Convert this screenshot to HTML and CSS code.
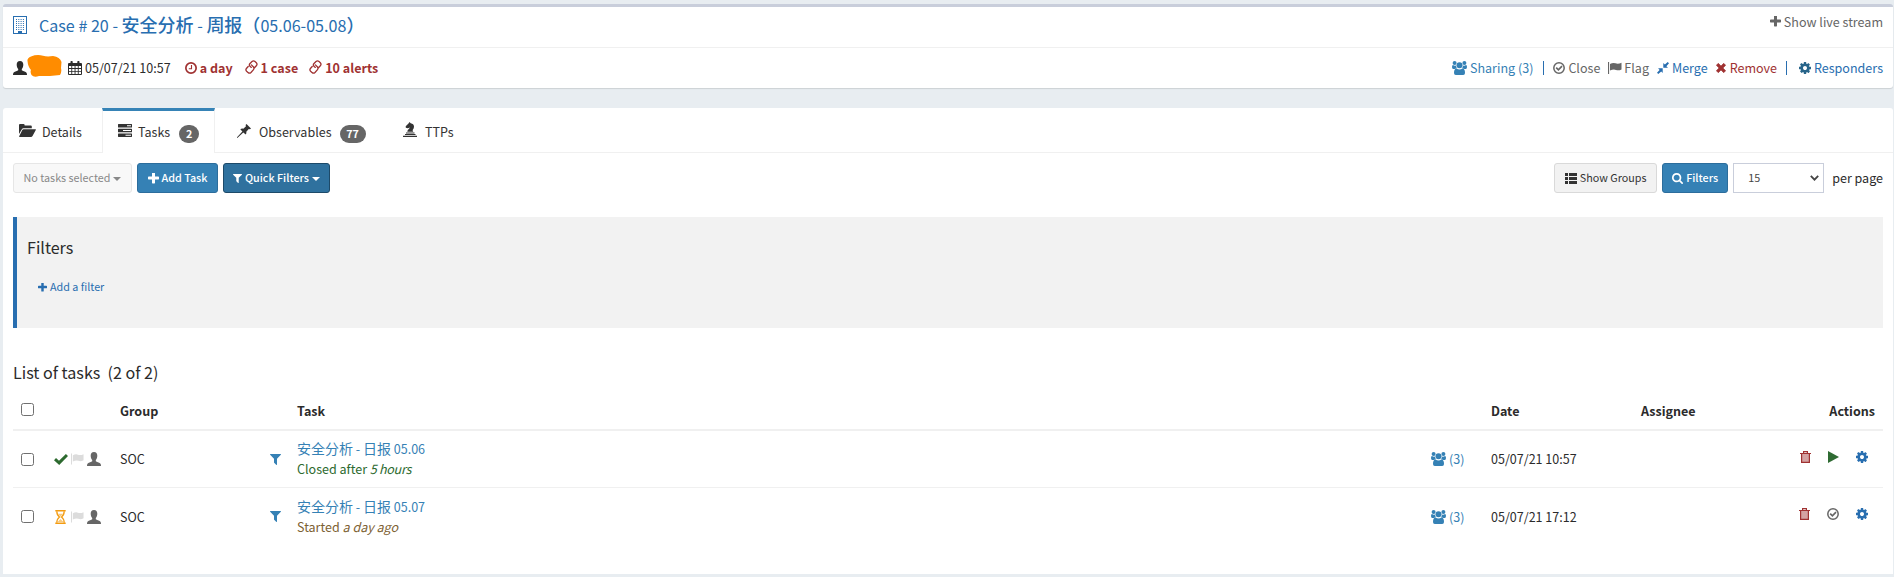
FILE: index.html
```
<!DOCTYPE html>
<html lang="zh-CN">
<head>
<meta charset="utf-8">
<title>Case # 20</title>
<link rel="stylesheet" href="styles.css">
</head>
<body>
<svg class="sprite" xmlns="http://www.w3.org/2000/svg">
  <symbol id="plus" viewBox="192 192 1408 1408"><path d="M1600 736v192q0 40-28 68t-68 28h-416v416q0 40-28 68t-68 28h-192q-40 0-68-28t-28-68v-416h-416q-40 0-68-28t-28-68v-192q0-40 28-68t68-28h416v-416q0-40 28-68t68-28h192q40 0 68 28t28 68v416h416q40 0 68 28t28 68z"/></symbol>
  <symbol id="cog" viewBox="128 128 1536 1536"><path d="M1152 896q0-106-75-181t-181-75-181 75-75 181 75 181 181 75 181-75 75-181zm512-109v222q0 12-8 23t-20 13l-185 28q-19 54-39 91 35 50 107 138 10 12 10 25t-9 23q-27 37-99 108t-94 71q-12 0-26-9l-138-108q-44 23-91 38-16 136-29 186-7 28-36 28h-222q-14 0-24.5-8.5t-11.5-21.5l-28-184q-49-16-90-37l-141 107q-10 9-25 9-14 0-25-11-126-114-165-168-7-10-7-23 0-12 8-23 15-21 51-66.5t54-70.5q-27-50-41-99l-183-27q-13-2-21-12.5t-8-23.5v-222q0-12 8-23t19-13l186-28q14-46 39-92-40-57-107-138-10-12-10-24 0-10 9-23 26-36 98.5-107.5t94.5-71.5q13 0 26 10l138 107q44-23 91-38 16-136 29-186 7-28 36-28h222q14 0 24.500 8.500t11.500 21.500l28 184q49 16 90 37l142-107q9-9 24-9 13 0 25 10 129 119 165 170 7 8 7 22 0 12-8 23-15 21-51 66.500t-54 70.500q26 50 41 98l183 28q13 2 21 12.500t8 23.500z"/></symbol>
  <symbol id="filter" viewBox="192 256 1408 1408"><path d="M1595 295q17 41-14 70l-493 493v742q0 42-39 59-13 5-25 5-27 0-45-19l-256-256q-19-19-19-45v-486l-493-493q-31-29-14-70 17-39 59-39h1280q42 0 59 39z"/></symbol>
  <symbol id="search" viewBox="64 128 1664 1664"><path d="M1216 832q0-185-131.500-316.500t-316.500-131.500-316.500 131.500-131.500 316.500 131.500 316.500 316.500 131.500 316.500-131.500 131.500-316.500zm512 832q0 52-38 90t-90 38q-54 0-90-38l-343-342q-179 124-399 124-143 0-273.500-55.500t-225-150-150-225-55.500-273.500 55.500-273.500 150-225 225-150 273.500-55.500 273.500 55.500 225 150 150 225 55.500 273.500q0 220-124 399l343 343q37 37 37 90z"/></symbol>
  <symbol id="building" viewBox="0 0 14 18"><path fill-rule="evenodd" d="M0 0h14v18H0zM1 1v16h4v-2h4v2h4V1z"/><path d="M3 3.500h9M3 5.500h9M3 7.500h9M3 9.500h9M3 11.500h9M3 13.500h9" stroke="currentColor" stroke-width="1" stroke-dasharray="1 1.300"/></symbol>
  <symbol id="user" viewBox="0 0 14 14"><path d="M7 0C9.300 0 10.300 1.600 10.300 3.800c0 2-.7 3.200-1.500 4.200v1.300c1.800 1 3.900 1.500 4.700 2.500.4.600.5 1.300.5 2.200H0c0-.9.100-1.600.5-2.200.8-1 2.900-1.500 4.700-2.500V8C4.400 7 3.700 5.800 3.700 3.800 3.700 1.600 4.700 0 7 0z"/></symbol>
  <symbol id="calendar" viewBox="0 0 14 14"><path fill-rule="evenodd" d="M1 2h1.500V.7q0-.7.700-.7h.8q.7 0 .7.700V2h4.600V.7q0-.7.700-.7h.8q.7 0 .7.700V2H13q1 0 1 1v10q0 1-1 1H1q-1 0-1-1V3q0-1 1-1zM1 5v2h2.300V5zm3.200 0v2h2.400V5zm3.300 0v2h2.300V5zm3.200 0v2H13V5zM1 7.900v2h2.300v-2zm3.200 0v2h2.400v-2zm3.300 0v2h2.300v-2zm3.200 0v2H13v-2zM1 10.800V13h2.300v-2.200zm3.200 0V13h2.400v-2.200zm3.300 0V13h2.300v-2.200zm3.200 0V13H13v-2.200z"/></symbol>
  <symbol id="clock" viewBox="0 0 12 12"><circle cx="6" cy="6" r="5.150" fill="none" stroke="currentColor" stroke-width="1.700"/><path d="M6.500 3v3.800H3.800" fill="none" stroke="currentColor" stroke-width="1.100"/></symbol>
  <symbol id="link" viewBox="0 0 13 14"><g fill="none" stroke="currentColor" stroke-width="1.300" stroke-linecap="round"><path d="M6.300 7.400 5 6.300Q3.800 5 4.800 3.700L7 1.500Q8.500.2 10 1.500L11.300 2.700Q12.600 4 11.500 5.500L9.500 7.700M6.400 4.900 8.500 7Q9.500 8.300 8.500 9.700L6 12.500Q4.500 13.800 3 12.500L1.600 11.300Q.3 10 1.400 8.500L3.200 6.500"/></g></symbol>
  <symbol id="users" viewBox="0 0 15 14"><circle cx="2.600" cy="2" r="2"/><circle cx="12.400" cy="2" r="2"/><circle cx="7.500" cy="4.300" r="3"/><path d="M0 6q0-2 1-2 1.500 1 3 .4Q4 6 5 7.200 3.700 7.300 3 8H1.200Q0 7.900 0 6zM15 6q0-2-1-2-1.500 1-3 .4.0 1.600-1 2.800 1.300.1 2 .8h1.800Q15 7.900 15 6z"/><path d="M4.500 7.500Q7.500 9.700 10.500 7.500 13 7.500 13 12q0 2-1.800 2H3.800Q2 14 2 12 2 7.500 4.500 7.500z"/></symbol>
  <symbol id="checkcircle" viewBox="0 0 12 12"><circle cx="6" cy="6" r="5.200" fill="none" stroke="currentColor" stroke-width="1.500"/><path d="M3.200 5.700 5.400 7.800 9 4.200" fill="none" stroke="currentColor" stroke-width="1.700"/></symbol>
  <symbol id="flag" viewBox="0 0 14 12"><path d="M0 0h1.100v12H0zM2 2Q5 .2 7.500 1.300 10 2.300 13.500.8V7.400Q10.500 9 8 7.900 5.500 6.800 2 8.600z"/></symbol>
  <symbol id="merge" viewBox="0 0 12 12"><path d="M5.700 6.300V11L4.200 9.500 1.300 12 0 10.700 2.600 7.900 1.100 6.300zM6.300 5.700V1L7.900 2.500 10.700 0 12 1.300 9.400 4.200 11 5.700z"/></symbol>
  <symbol id="times" viewBox="0 0 10 10"><path d="M2.300.3 5 3 7.700.3 9.700 2.300 7 5 9.700 7.700 7.700 9.700 5 7 2.300 9.700.3 7.700 3 5 .3 2.300z" stroke="currentColor" stroke-width=".6" stroke-linejoin="round"/></symbol>
  <symbol id="folder" viewBox="0 0 17 13"><path d="M0 10V1Q0 0 1 0h3.600q1 0 1 1v.6h6.200q1 0 1 1v1.600H4.500Q3.400 4.200 2.700 5.400z"/><path d="M4.600 5.200H16.300q1 0 .5.900L13.500 12q-.5 1-1.500 1H.7q-1 0-.4-1L3.300 6q.4-.8 1.300-.8z"/></symbol>
  <symbol id="tasks" viewBox="0 0 14 13"><path fill-rule="evenodd" d="M.5 0h13q.5 0 .5.500v2.700q0 .4-.5.400H.5Q0 3.600 0 3.200V.5Q0 0 .5 0zM9 1.300v1h4v-1zM.5 4.700h13q.5 0 .5.500v2.700q0 .4-.5.400H.5Q0 8.300 0 7.900V5.200q0-.5.500-.5zM5 6v1h8V6zM.5 9.400h13q.5 0 .5.500v2.700q0 .4-.5.400H.5q-.5 0-.5-.4V9.900q0-.5.500-.5zM7.500 10.700v1H13v-1z"/></symbol>
  <symbol id="pin" viewBox="0 0 14 14"><path d="M9.500 0 14 4.500 13 5.300 11.800 5 9.300 7.700Q9.800 9.300 8.700 10.600L6.300 8.500.6 13.800 0 13.900 0 13.300 5.400 7.600 3.300 5.300Q4.700 4.200 6.300 4.700L9 2.200 8.600 1z"/></symbol>
  <symbol id="knight" viewBox="0 0 14 15"><path d="M6.500 0 7.700 1.200Q10.800 1.700 11 4.600 11.100 6.500 9.800 7.700 9.300 8.900 10.300 9.700H4.300Q4.200 8 6 6.700L7 5.500 4.800 6.300 2.800 5.800 2.700 4.300 5.500 1.500zM3 10.500h8.500v1H3zM2 12.100h10.500v1H2zM0 13.700h14V15H0z"/></symbol>
  <symbol id="list" viewBox="0 0 12 11"><path d="M0 0h3v3H0zM4 0h8v3H4zM0 4h3v3H0zM4 4h8v3H4zM0 8h3v3H0zM4 8h8v3H4z"/></symbol>
  <symbol id="check" viewBox="0 0 14 11"><path d="M0 6.200 2 4.100 5 6.700 11.900 0 14 2.100 5.200 11z"/></symbol>
  <symbol id="hourglass" viewBox="0 0 11 14"><path d="M.3.700h10.400M.3 13.300h10.400" stroke="currentColor" stroke-width="1.400"/><path d="M1.800 1.200Q1.800 5 4.500 7 1.800 9 1.800 12.800M9.200 1.200Q9.200 5 6.500 7 9.200 9 9.200 12.800" fill="none" stroke="currentColor" stroke-width="1.300"/><path d="M2.800 3.800h5.400L5.500 6.600zM2.500 12 5.500 9 8.500 12z" opacity=".55"/></symbol>
  <symbol id="trash" viewBox="0 0 11 12"><path d="M1.500 3h8v8.400h-8z" opacity=".45"/><path d="M0 2.500h11M1.600 3v8.400h7.800V3M3.600 2V.7h3.800V2" fill="none" stroke="currentColor" stroke-width="1.200"/></symbol>
  <symbol id="play" viewBox="0 0 11 12"><path d="M0 0 11 6 0 12z"/></symbol>
  <symbol id="scribble" viewBox="0 0 35 22"><path d="M.5 6Q0 3 4 1.500 10-1 16 .7 20 2 26 1 33 2 34.500 7L34 13Q35 17 33 20L23 21H12Q7 23 4.500 20 3 17 4 15 1 12 .5 6z"/></symbol>
</svg>

<header class="case">
  <div class="case-title">
    <h1><svg class="i-building"><use href="#building"/></svg><span>Case # 20 - <b class="han">安全分析</b> - <b class="han">周报（</b>05.06-05.08<b class="han">）</b></span></h1>
    <a class="stream gray"><svg class="i11"><use href="#plus"/></svg>Show live stream</a>
  </div>
  <div class="case-info">
    <div class="meta">
      <svg class="i14"><use href="#user"/></svg><svg class="i-scribble"><use href="#scribble"/></svg>
      <span class="it date"><svg class="i14"><use href="#calendar"/></svg>05/07/21 10:57</span>
      <strong class="it age"><svg class="i12"><use href="#clock"/></svg>a day</strong>
      <strong class="it cases"><svg class="i-link"><use href="#link"/></svg>1 case</strong>
      <strong class="it alerts"><svg class="i-link"><use href="#link"/></svg>10 alerts</strong>
    </div>
    <nav class="case-actions">
      <a class="it sky sharing"><svg class="i-users"><use href="#users"/></svg>Sharing (3)</a>
      <i class="sep"></i>
      <a class="it gray close"><svg class="i12"><use href="#checkcircle"/></svg>Close</a>
      <a class="it gray flagged"><svg class="i-flag"><use href="#flag"/></svg>Flag</a>
      <a class="it blue merge"><svg class="i12"><use href="#merge"/></svg>Merge</a>
      <a class="it red remove"><svg class="i10"><use href="#times"/></svg>Remove</a>
      <i class="sep"></i>
      <a class="it blue responders"><svg class="i12 teal"><use href="#cog"/></svg>Responders</a>
    </nav>
  </div>
</header>

<main class="panel">
  <nav class="tabs">
    <a class="tab t-details"><svg class="i-folder"><use href="#folder"/></svg>Details</a>
    <a class="tab t-tasks active"><svg class="i-tasks"><use href="#tasks"/></svg>Tasks<span class="badge">2</span></a>
    <a class="tab t-obs"><svg class="i-pin"><use href="#pin"/></svg>Observables<span class="badge wide">77</span></a>
    <a class="tab t-ttps"><svg class="i-knight"><use href="#knight"/></svg>TTPs</a>
  </nav>
  <div class="toolbar">
    <button class="btn none">No tasks selected<i class="caret"></i></button>
    <button class="btn primary add"><svg class="i11"><use href="#plus"/></svg>Add Task</button>
    <button class="btn dark quick"><svg class="i9"><use href="#filter"/></svg>Quick Filters<i class="caret"></i></button>
    <div class="spacer"></div>
    <button class="btn groups"><svg class="i-list"><use href="#list"/></svg>Show Groups</button>
    <button class="btn primary filters-btn"><svg class="i11"><use href="#search"/></svg>Filters</button>
    <div class="select"><span>15</span><svg class="i-chev" viewBox="0 0 9 6"><path d="M.8.8 4.500 4.600 8.200.8" fill="none" stroke="currentColor" stroke-width="1.800"/></svg></div>
    <span class="per-page">per page</span>
  </div>
  <section class="filters">
    <h2>Filters</h2>
    <a class="blue"><svg class="i9"><use href="#plus"/></svg>Add a filter</a>
  </section>
  <h2 class="list-title">List of tasks&nbsp; (2 of 2)</h2>
  <div class="table">
    <div class="row head">
      <span><i class="box"></i></span><span></span><span>Group</span><span></span><span>Task</span><span></span><span>Date</span><span>Assignee</span><span class="end">Actions</span>
    </div>
    <div class="row">
      <span><i class="box"></i></span>
      <span class="state"><svg class="i-check"><use href="#check"/></svg><svg class="i-flag light"><use href="#flag"/></svg><svg class="i14 gray"><use href="#user"/></svg></span>
      <span>SOC</span>
      <span class="sky"><svg class="i-filter"><use href="#filter"/></svg></span>
      <div class="task"><a class="sky"><b class="han">安全分析</b> - <b class="han">日报</b> 05.06</a><p class="closed">Closed after <em>5 hours</em></p></div>
      <span class="it sky share"><svg class="i-users"><use href="#users"/></svg>(3)</span>
      <span class="dt">05/07/21 10:57</span><span></span>
      <span class="acts"><svg class="i-trash red"><use href="#trash"/></svg><svg class="i-play"><use href="#play"/></svg><svg class="i12 blue"><use href="#cog"/></svg></span>
    </div>
    <div class="row last">
      <span><i class="box"></i></span>
      <span class="state"><svg class="i-hour"><use href="#hourglass"/></svg><svg class="i-flag light"><use href="#flag"/></svg><svg class="i14 gray"><use href="#user"/></svg></span>
      <span>SOC</span>
      <span class="sky"><svg class="i-filter"><use href="#filter"/></svg></span>
      <div class="task"><a class="sky"><b class="han">安全分析</b> - <b class="han">日报</b> 05.07</a><p class="started">Started <em>a day ago</em></p></div>
      <span class="it sky share"><svg class="i-users"><use href="#users"/></svg>(3)</span>
      <span class="dt">05/07/21 17:12</span><span></span>
      <span class="acts"><svg class="i-trash red"><use href="#trash"/></svg><svg class="i12 gray"><use href="#checkcircle"/></svg><svg class="i12 blue"><use href="#cog"/></svg></span>
    </div>
  </div>
</main>
</body>
</html>
```

FILE: styles.css
```
* { box-sizing: border-box; }
body {
  margin: 0; padding: 4px 1px 3px 3px; height: 577px; overflow: hidden;
  background: #e8edf1; color: #2b2b2b;
  font: 12.54px/20px "Noto Sans CJK SC", "Open Sans", sans-serif;
  display: flex; flex-direction: column; gap: 20px;
}
h1, h2, p { margin: 0; font-weight: 400; }
svg { fill: currentColor; flex: none; display: block; overflow: visible; }
.sprite { position: absolute; width: 0; height: 0; }
.han { font-size: 14px; font-weight: 400; }
.gray { color: #666; } .blue { color: #286eb0; } .sky { color: #3581b5; }
.red { color: #a03232; } .teal { color: #28658a; } .light { color: #dcdcdc; }
.i9 { width: 9px; height: 9px; } .i10 { width: 10px; height: 10px; }
.i11 { width: 11px; height: 11px; } .i12 { width: 12px; height: 12px; }
.i14 { width: 14px; height: 14px; }
.i-building { width: 14px; height: 18px; }
.i-scribble { width: 35px; height: 22px; color: #ff8c00; margin-top: -5px; }
.i-link { width: 13px; height: 14px; margin-top: -2px; }
.i-users { width: 15px; height: 14px; }
.i-flag { width: 14px; height: 12px; }
.i-folder { width: 17px; height: 13px; }
.i-tasks { width: 14px; height: 13px; }
.i-pin { width: 14px; height: 14px; }
.i-knight { width: 14px; height: 15px; }
.i-list { width: 12px; height: 11px; }
.i-chev { width: 9px; height: 6px; }
.i-check { width: 14px; height: 11px; color: #2d6a2f; }
.i-hour { width: 11px; height: 14px; color: #f39c12; margin: 0 2px 0 1px; }
.i-filter { width: 11px; height: 11px; }
.i-trash { width: 11px; height: 12px; }
.i-play { width: 11px; height: 12px; color: #2f6b33; }

.case {
  height: 84px; flex: none; background: #fff; border-top: 3px solid #c9cedb;
  border-radius: 3px; box-shadow: 0 1px 1px rgba(0,0,0,.12);
}
.case-title {
  height: 41px; padding: 0 10px; border-bottom: 1px solid #f0f0f0;
  display: flex; justify-content: space-between;
}
.case-title h1 { display: flex; align-items: center; gap: 12px; color: #286eb0; font-size: 16.1px; line-height: 36px; height: 36px; white-space: pre; }
.case-title .han { font-size: 18px; line-height: 1; font-weight: 500; }
.stream { display: flex; align-items: center; gap: 3px; height: 29px; }
.case-info { height: 40px; padding: 0 10px; display: flex; justify-content: space-between; align-items: center; }
.meta, .case-actions { display: flex; align-items: center; }
.it { display: flex; align-items: center; gap: 3px; white-space: nowrap; }
.date { margin-left: 6px; }
.meta strong { color: #a03232; }
.age { margin-left: 14px; }
.cases { margin-left: 12px; }
.alerts { margin-left: 11px; }
.sep { width: 1px; height: 14px; background: #286eb0; margin: 0 9px; }
.sharing { margin-right: 1px; }
.flagged, .merge, .remove { margin-left: 8px; }
.flagged { gap: 2px; }
.remove { gap: 4px; }
.responders { margin-left: 3px; }

.panel { flex: 1; background: #fff; border-radius: 3px 3px 0 0; }
.tabs { display: flex; height: 45px; border-bottom: 1px solid #f0f0f0; }
.tab { display: flex; align-items: center; height: 45px; padding-top: 2px; color: #333; border: solid transparent; border-width: 0 1px; }
.tab svg { margin-top: -2px; }
.t-details { width: 99px; padding-left: 15px; gap: 6px; }
.t-tasks { width: 113px; padding-left: 15px; gap: 6px; }
.tab.active { background: #fff; border-color: #f0f0f0; border-top: 3px solid #3683b6; padding: 0 0 1px 15px; }
.t-obs { width: 167px; padding-left: 21px; gap: 8px; }
.t-ttps { padding-left: 20px; gap: 8px; }
.tab .i-knight { margin-top: -5px; }
.badge { width: 20px; height: 18px; border-radius: 9px; background: #666; color: #fff; font-size: 10.75px; font-weight: 700; line-height: 18px; text-align: center; margin: 4px 0 0 3px; }
.wide { width: 26px; margin-left: 0; }

.toolbar { display: flex; align-items: center; padding: 10px 10px 0; height: 40px; }
.btn {
  display: flex; align-items: center; justify-content: center; height: 30px; padding: 0;
  border: 1px solid #d9d9d9; border-radius: 3px; background: #f2f2f2; color: #444;
  font: 10.75px/18px "Noto Sans CJK SC", "Open Sans", sans-serif; gap: 3px; white-space: nowrap;
}
.caret { border: solid transparent; border-width: 4px 4px 0; border-top-color: currentColor; margin-top: 1px; }
.none { width: 119px; background: #f8f8f8; border-color: #e6e6e6; color: #888; }
.primary { background: #3581b5; border-color: #2c6d9c; color: #fff; font-weight: 500; }
.dark { background: #2f719e; border-color: #1d4a69; color: #fff; font-weight: 500; }
.add { width: 81px; margin: 0 5px; }
.quick { width: 107px; }
.spacer { flex: 1; }
.groups { width: 103px; color: #333; }
.filters-btn { width: 66px; margin: 0 5px; }
.select { width: 91px; height: 30px; border: 1px solid #c9cedb; display: flex; align-items: center; justify-content: space-between; padding: 0 4px 0 14px; font-size: 10.75px; color: #444; }
.per-page { margin-left: 8px; }

.filters { margin: 24px 10px 0; height: 111px; border-left: 4px solid #286eb0; background: #f2f2f2; padding: 19px 0 0 10px; }
.filters h2 { font-size: 16.1px; line-height: 22px; }
.filters a { display: flex; align-items: center; gap: 3px; font-size: 10.75px; margin: 19px 0 0 11px; }
.list-title { margin: 33px 10px 0; font-size: 16.1px; line-height: 22px; }
.table { margin: 9px 10px 0; }
.row {
  display: grid; align-items: center; height: 57px; border-bottom: 1px solid #f0f0f0;
  grid-template-columns: 40px 67px 150px 27px 1134px 60px 150px 150px 1fr;
}
.row.head { height: 39px; border-bottom: 2px solid #f0f0f0; font-weight: 700; }
.row.last { border-bottom: 0; }
.box { display: block; width: 13px; height: 13px; margin-left: 8px; border: 1px solid #707070; border-radius: 2.5px; background: #fff; }
.head .box { margin-top: -3px; }
.state { display: flex; align-items: center; gap: 3px; padding-left: 1px; }
.state .i-flag { width: 13px; }
.head .end { text-align: right; padding-right: 8px; }
.task .sky, .task p { display: block; line-height: 20px; height: 20px; }
.task .han { line-height: 1; }
.closed { color: #2d6a2f; } .started { color: #7d6132; }
.closed em { letter-spacing: -.3px; }
.acts { display: flex; align-items: center; justify-content: flex-end; gap: 17px; padding-right: 15px; margin-top: -5px; }
```
